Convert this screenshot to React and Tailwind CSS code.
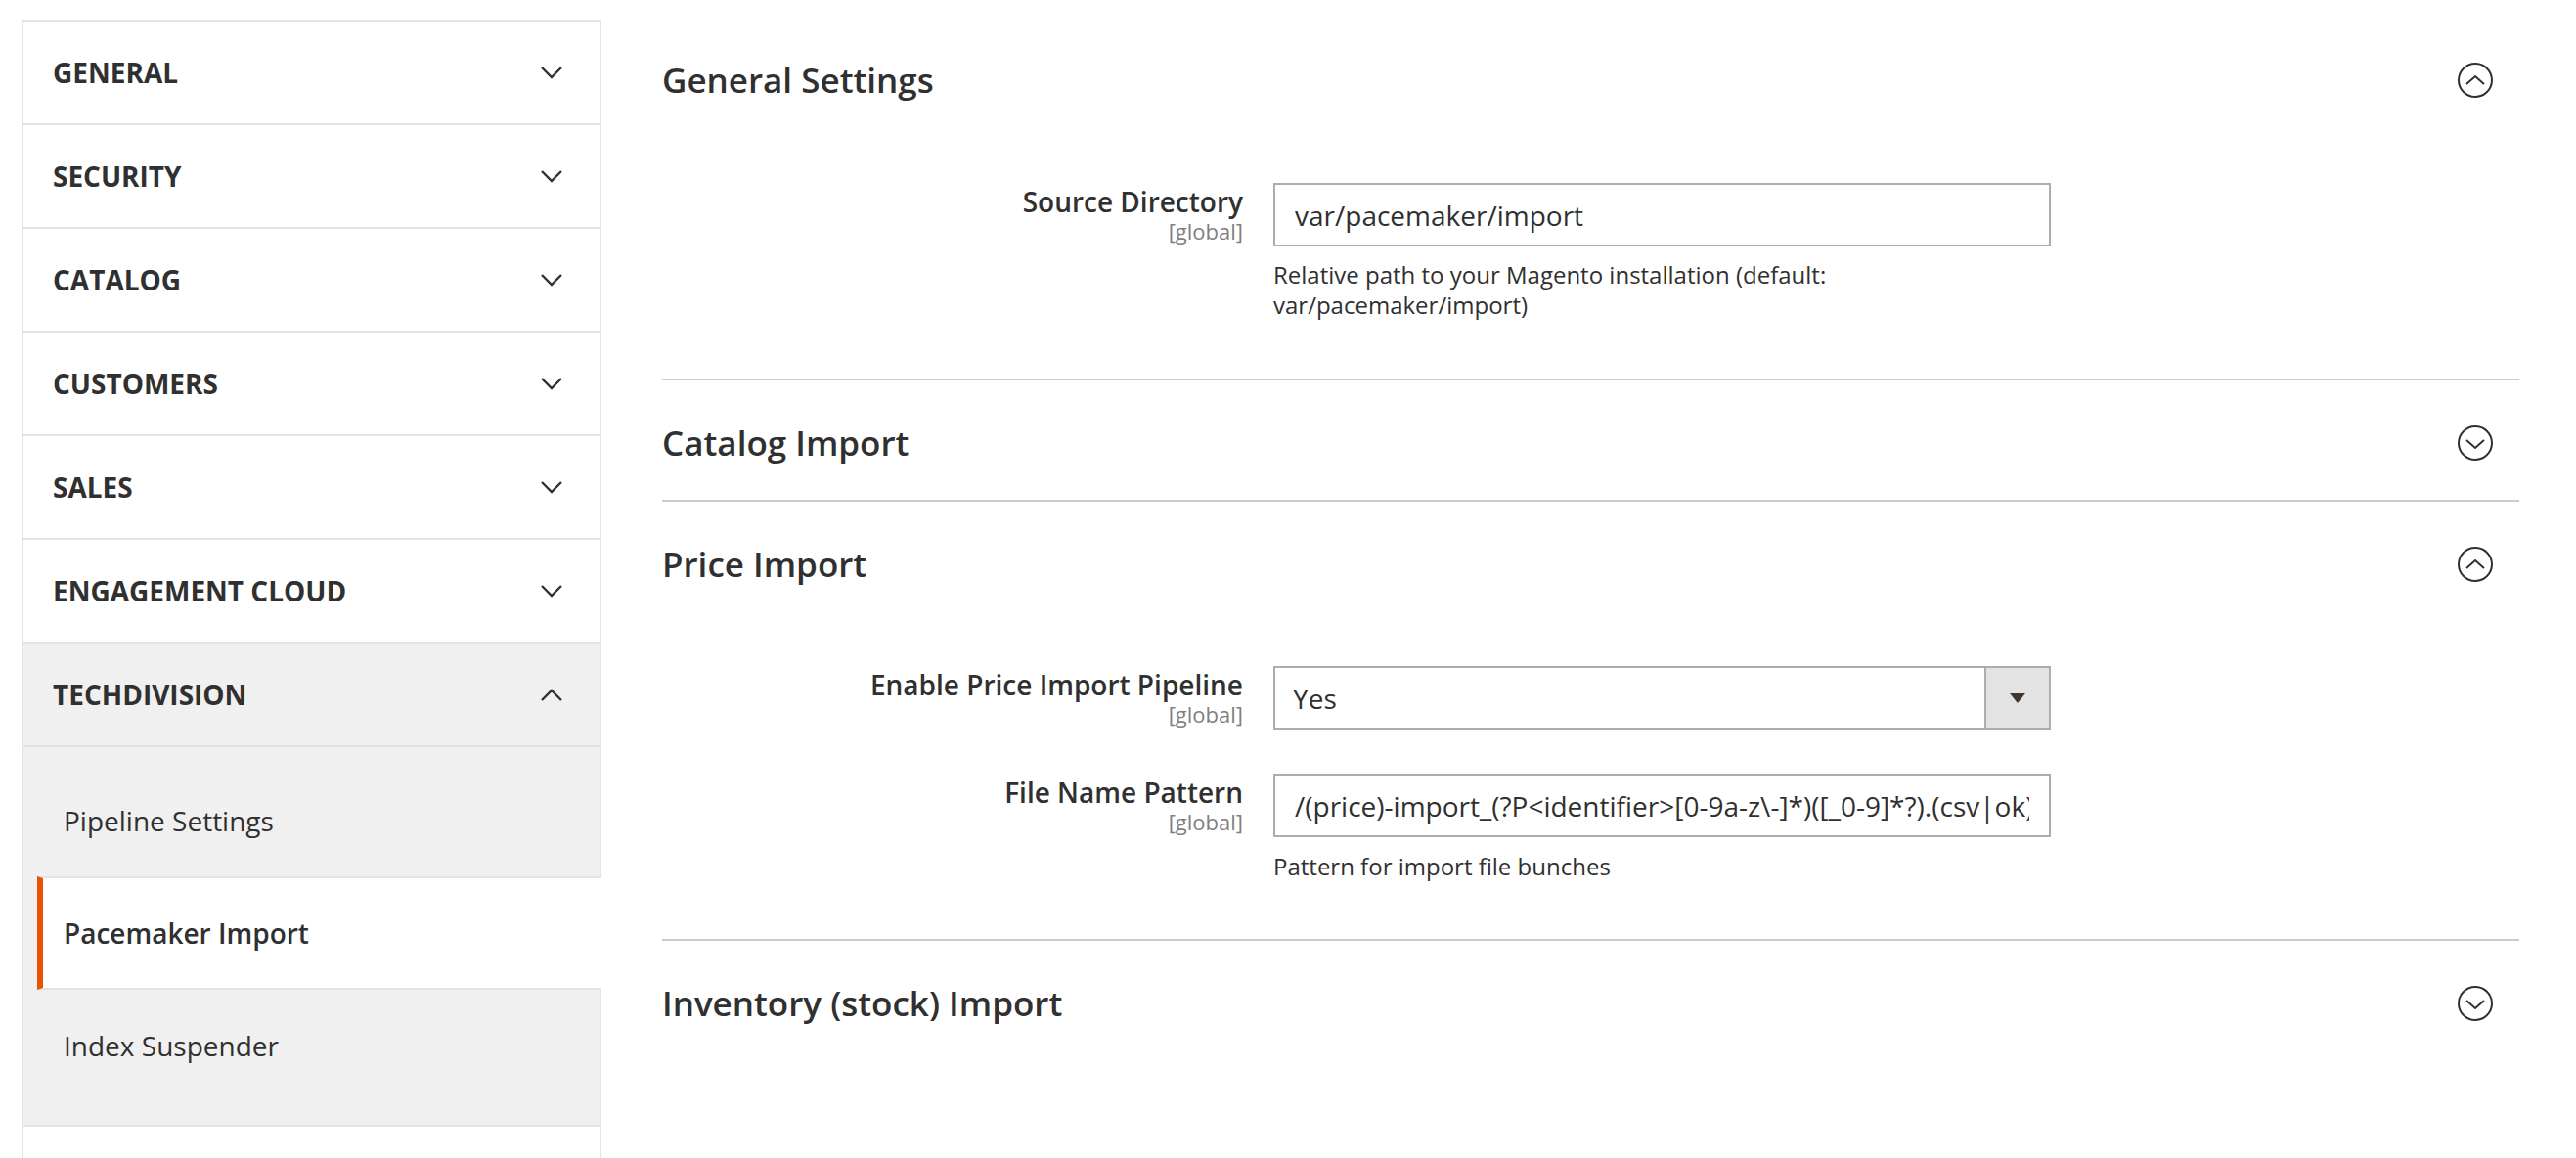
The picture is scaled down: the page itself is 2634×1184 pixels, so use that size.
const navGroups = [
  { title: 'GENERAL' },
  { title: 'SECURITY' },
  { title: 'CATALOG' },
  { title: 'CUSTOMERS' },
  { title: 'SALES' },
  { title: 'ENGAGEMENT CLOUD' },
];

const techItems = [
  { label: 'Pipeline Settings' },
  { label: 'Pacemaker Import', active: true },
  { label: 'Index Suspender' },
];

export default function App() {
  return (
    <div className="flex h-screen overflow-hidden bg-white font-['Open_Sans',sans-serif] text-[#303030]">
      <Sidebar />

      <main className="ml-[62px] mr-[58px] min-w-0 flex-1 pt-[18px]">
        <section className="border-b-2 border-[#cccccc]">
          <SectionHeader title="General Settings" open />
          <div className="pb-[60px] pt-[47px]">
            <Field label="Source Directory" note="Relative path to your Magento installation (default: var/pacemaker/import)">
              <TextInput value="var/pacemaker/import" />
            </Field>
          </div>
        </section>

        <section className="border-b-2 border-[#cccccc]">
          <SectionHeader title="Catalog Import" />
        </section>

        <section className="border-b-2 border-[#cccccc]">
          <SectionHeader title="Price Import" open />
          <div className="flex flex-col gap-[45px] pb-[59px] pt-[46px]">
            <Field label="Enable Price Import Pipeline">
              <SelectBox value="Yes" />
            </Field>
            <Field label="File Name Pattern" note="Pattern for import file bunches" noteGap="mt-[14px]">
              <TextInput value="/(price)-import_(?P<identifier>[0-9a-z\-]*)([_0-9]*?).(csv|ok)$/i" />
            </Field>
          </div>
        </section>

        <section>
          <SectionHeader title="Inventory (stock) Import" />
        </section>
      </main>
    </div>
  );
}

function Sidebar() {
  return (
    <aside className="ml-[22px] mt-[20px] w-[593px] shrink-0 self-start border-x-2 border-t-2 border-[#e3e3e3]">
      {navGroups.map((group) => (
        <NavGroup key={group.title} title={group.title} />
      ))}
      <NavGroup title="TECHDIVISION" open />
      <div className="border-b-2 border-[#e3e3e3] bg-[#f0f0f0] pb-[24px] pt-[18px]">
        {techItems.map((item) =>
          item.active ? (
            <div
              key={item.label}
              className="-mr-[2px] ml-[14px] flex h-[116px] items-center border-y-2 border-l-[6px] border-y-[#e3e3e3] border-l-[#eb5202] bg-white pl-[21px] text-[28px] font-semibold"
            >
              {item.label}
            </div>
          ) : (
            <div key={item.label} className="ml-[14px] flex h-[114px] items-center pl-[27px] text-[28px]">
              {item.label}
            </div>
          ),
        )}
      </div>
      <div className="h-[200px]" />
    </aside>
  );
}

function NavGroup({ title, open }) {
  return (
    <div
      className={`flex h-[106px] items-center justify-between border-b-2 border-[#e3e3e3] pl-[30px] pr-[38px] ${open ? 'bg-[#f0f0f0]' : ''}`}
    >
      <span className="text-[28px] font-bold">{title}</span>
      <svg width="22" height="13" viewBox="0 0 22 13" fill="none" stroke="#303030" strokeWidth="2.4" aria-hidden="true">
        {open ? <polyline points="1,12 11,2 21,12" /> : <polyline points="1,1 11,11 21,1" />}
      </svg>
    </div>
  );
}

function SectionHeader({ title, open }) {
  return (
    <div className="flex items-center justify-between pb-[40px] pr-[27px] pt-[46px]">
      <h2 className="text-[35px] font-semibold leading-[36px]">{title}</h2>
      <svg width="36" height="36" viewBox="0 0 36 36" fill="none" stroke="#303030" strokeWidth="2" aria-hidden="true">
        <circle cx="18" cy="18" r="17" />
        {open ? <polyline points="9,22 18,14 27,22" /> : <polyline points="9,15 18,23 27,15" />}
      </svg>
    </div>
  );
}

function Field({ label, note, noteGap = 'mt-[13px]', children }) {
  return (
    <div>
      <div className="flex">
        <div className="w-[625px] shrink-0 pr-[31px] pt-[2px] text-right">
          <div className="text-[28px] font-semibold leading-[34px]">{label}</div>
          <div className="text-[22px] leading-[27px] text-[#808080]">[global]</div>
        </div>
        <div className="w-[795px]">{children}</div>
      </div>
      {note && <p className={`ml-[625px] w-[795px] text-[24px] leading-[31px] ${noteGap}`}>{note}</p>}
    </div>
  );
}

function TextInput({ value }) {
  return (
    <input
      readOnly
      value={value}
      className="block h-[65px] w-full border-2 border-[#adadad] bg-white px-[20px] text-[28px] text-[#303030] outline-none"
    />
  );
}

function SelectBox({ value }) {
  return (
    <div className="flex h-[65px] w-full border-2 border-[#adadad] bg-white">
      <div className="flex flex-1 items-center px-[18px] text-[28px]">{value}</div>
      <div className="flex w-[66px] items-center justify-center border-l-2 border-[#adadad] bg-[#e3e3e3]">
        <svg width="16" height="10" viewBox="0 0 16 10" aria-hidden="true">
          <polygon points="0,0 16,0 8,10" fill="#41362f" />
        </svg>
      </div>
    </div>
  );
}
